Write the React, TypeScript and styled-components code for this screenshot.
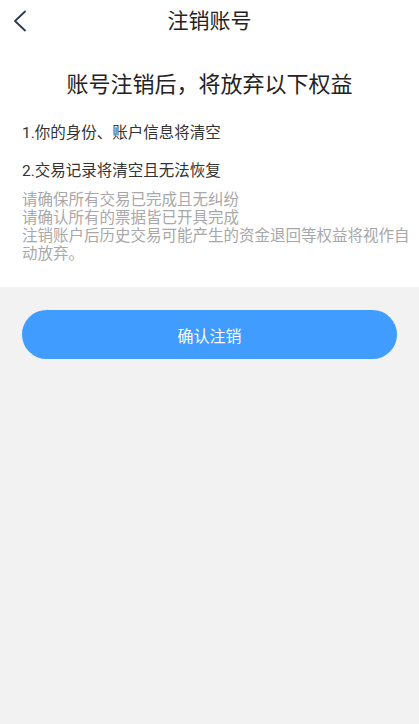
import styled, { createGlobalStyle } from 'styled-components';

const GlobalStyle = createGlobalStyle`
  html, body {
    margin: 0;
    padding: 0;
    background: #f2f2f2;
    font-family: Roboto, "Noto Sans CJK SC", sans-serif;
  }
`;

const notes = ['1.你的身份、账户信息将清空', '2.交易记录将清空且无法恢复'];

const tips = [
  '请确保所有交易已完成且无纠纷',
  '请确认所有的票据皆已开具完成',
  '注销账户后历史交易可能产生的资金退回等权益将视作自动放弃。',
];

export default function App() {
  return (
    <Page>
      <GlobalStyle />
      <Panel>
        <NavBar>
          <BackButton aria-label="返回">
            <svg width="14" height="22" viewBox="0 0 14 22" fill="none">
              <path
                d="M12 1.5L2 11l10 9.5"
                stroke="#2d3a4b"
                strokeWidth="1.8"
                strokeLinecap="round"
                strokeLinejoin="round"
              />
            </svg>
          </BackButton>
          <NavTitle>注销账号</NavTitle>
        </NavBar>
        <Heading>账号注销后，将放弃以下权益</Heading>
        <NoteList>
          {notes.map((n) => (
            <Note key={n}>{n}</Note>
          ))}
        </NoteList>
        <TipBox>
          {tips.map((t) => (
            <Tip key={t}>{t}</Tip>
          ))}
        </TipBox>
      </Panel>
      <Actions>
        <ConfirmButton>确认注销</ConfirmButton>
      </Actions>
    </Page>
  );
}

const Page = styled.div`
  min-height: 724px;
  background: #f2f2f2;
  display: flex;
  flex-direction: column;
`;

const Panel = styled.section`
  background: #fff;
  padding: 0 6px 24px 22px;
  display: flex;
  flex-direction: column;
`;

const NavBar = styled.header`
  height: 42px;
  margin: 0 -6px 0 -22px;
  position: relative;
  display: flex;
  align-items: center;
  justify-content: center;
`;

const BackButton = styled.button`
  position: absolute;
  left: 13px;
  top: 9px;
  width: 20px;
  height: 24px;
  padding: 0;
  border: none;
  background: none;
  display: flex;
  align-items: center;
  cursor: pointer;
`;

const NavTitle = styled.h1`
  margin: 0;
  font-size: 21px;
  font-weight: 400;
  color: #222;
  line-height: 1;
`;

const Heading = styled.h2`
  margin: 28px 12px 0 -4px;
  text-align: center;
  font-size: 22px;
  font-weight: 400;
  color: #222;
  line-height: 30px;
`;

const NoteList = styled.div`
  margin-top: 22px;
  display: flex;
  flex-direction: column;
  gap: 16px;
`;

const Note = styled.p`
  margin: 0;
  font-size: 15.5px;
  color: #333;
  line-height: 22px;
`;

const TipBox = styled.div`
  margin-top: 9px;
  display: flex;
  flex-direction: column;
`;

const Tip = styled.p`
  margin: 0;
  font-size: 15.5px;
  color: #a8a8a8;
  line-height: 18px;
`;

const Actions = styled.div`
  padding: 23px 22px;
`;

const ConfirmButton = styled.button`
  width: 100%;
  height: 49px;
  border: none;
  border-radius: 25px;
  background: #409cff;
  color: #fff;
  font-family: Roboto, "Noto Sans CJK SC", sans-serif;
  font-size: 16px;
  cursor: pointer;
`;
